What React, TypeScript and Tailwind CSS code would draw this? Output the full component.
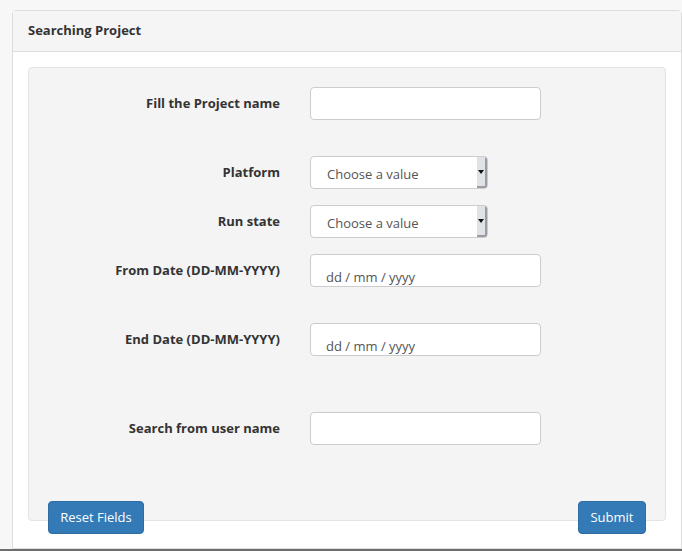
import React from 'react';

const font = { fontFamily: '"Open Sans", "Liberation Sans", sans-serif' };

const Label: React.FC<{ text: string }> = ({ text }) => (
  <div className="w-[251px] shrink-0 text-right text-[13px] font-bold text-[#333]">{text}</div>
);

const TextBox: React.FC = () => (
  <div className="h-[33px] w-[231px] rounded-[4px] border border-[#ccc] bg-white" />
);

const DateBox: React.FC = () => (
  <div className="h-[33px] w-[231px] rounded-[4px] border border-[#ccc] bg-white pl-[15px] pt-[13px] text-[13px] leading-[18px] text-[#555]">
    dd / mm / yyyy
  </div>
);

const SelectBox: React.FC = () => (
  <div className="flex h-[33px] w-[178px] overflow-hidden rounded-[4px] border border-[#ccc] bg-white">
    <div className="flex-1 pl-[16px] pt-[8px] text-[13px] leading-[18px] text-[#555]">Choose a value</div>
    <div className="flex w-[10px] items-center justify-center border-r-2 border-b-2 border-[#9a9ca0] bg-[#dfe3e8]">
      <svg width="6" height="4" viewBox="0 0 6 4">
        <path d="M0 0h6L3 4z" fill="#111" />
      </svg>
    </div>
  </div>
);

const Row: React.FC<{ label: string; className: string; children: React.ReactNode }> = ({ label, className, children }) => (
  <div className={`flex items-center gap-[30px] ${className}`}>
    <Label text={label} />
    {children}
  </div>
);

export default function App() {
  return (
    <div className="flex h-[551px] w-[682px] flex-col overflow-hidden bg-[#f7f7f7]" style={font}>
      <div className="ml-[12px] mt-[10px] flex flex-1 flex-col rounded-t-[4px] border border-[#ddd] bg-white">
        <div className="h-[41px] border-b border-[#ddd] bg-[#f5f5f5] px-[15px] pt-[10px] text-[13px] font-bold leading-[18px] text-[#333]">
          Searching Project
        </div>
        <div className="px-[15px] pt-[15px]">
          <div className="h-[454px] rounded-[4px] border border-[#e3e3e3] bg-[#f4f4f4] pt-[19px]">
            <Row label="Fill the Project name" className="">
              <TextBox />
            </Row>
            <Row label="Platform" className="mt-[36px]">
              <SelectBox />
            </Row>
            <Row label="Run state" className="mt-[16px]">
              <SelectBox />
            </Row>
            <Row label="From Date (DD-MM-YYYY)" className="mt-[16px]">
              <DateBox />
            </Row>
            <Row label="End Date (DD-MM-YYYY)" className="mt-[36px]">
              <DateBox />
            </Row>
            <Row label="Search from user name" className="mt-[56px]">
              <TextBox />
            </Row>
          </div>
          <div className="-mt-[20px] flex justify-between px-[20px]">
            <button className="h-[33px] w-[96px] rounded-[4px] border border-[#2e6da4] bg-[#337ab7] text-[13px] text-white">
              Reset Fields
            </button>
            <button className="h-[33px] w-[68px] rounded-[4px] border border-[#2e6da4] bg-[#337ab7] text-[13px] text-white">
              Submit
            </button>
          </div>
        </div>
      </div>
      <div className="h-[2px] bg-[#6e6e6e]" />
    </div>
  );
}
